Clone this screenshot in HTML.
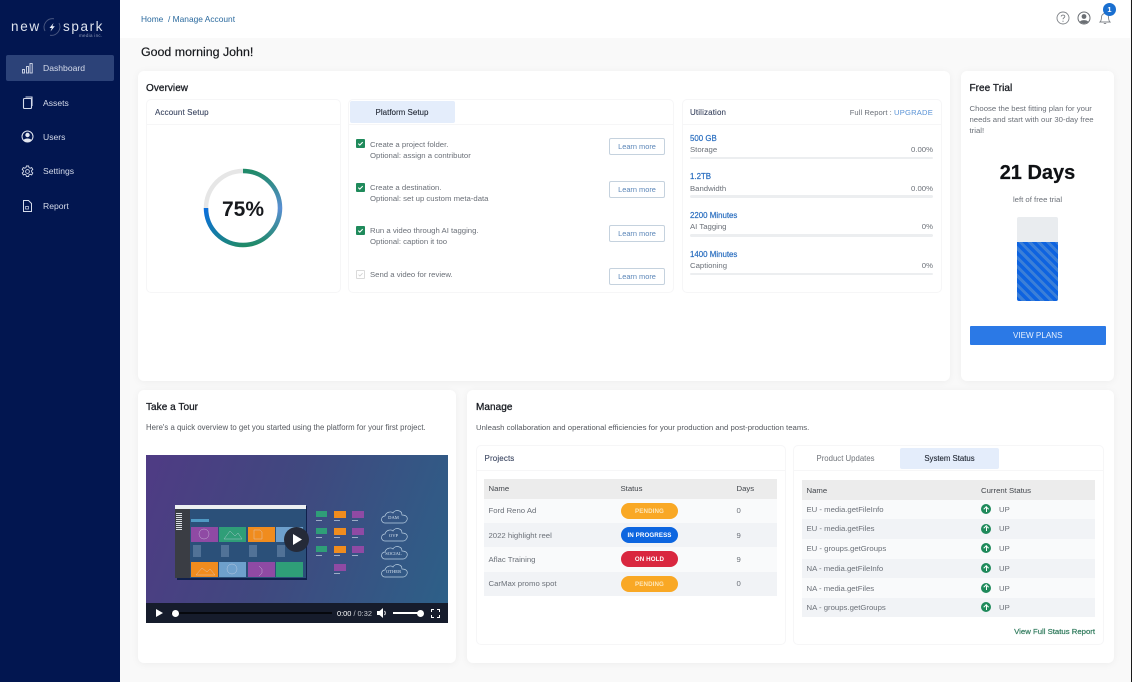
<!DOCTYPE html>
<html><head><meta charset="utf-8"><title>Dashboard</title>
<style>
*{box-sizing:border-box}
html,body{margin:0;padding:0;width:1132px;height:682px;overflow:hidden;background:#f9f9f9;font-family:"Liberation Sans",sans-serif;color:#6b7078}
.a,.t{position:absolute}
.t{white-space:nowrap;font-size:7.75px;line-height:11px;letter-spacing:0}
.card{position:absolute;background:#fff;border-radius:6px;box-shadow:0 1px 8px rgba(0,0,0,.05)}
.sub{position:absolute;background:#fff;border:1px solid #f6f6f7;border-radius:5px}
.h{font-size:10px;color:#1b1e24;letter-spacing:.05px;-webkit-text-stroke:.3px #1b1e24}
.sh{color:#3a4560;font-size:8px;letter-spacing:.13px;-webkit-text-stroke:.1px #3a4560}
.nav{color:#d5dbea;font-size:8.6px;letter-spacing:0}
.lm{position:absolute;left:609px;width:56px;height:17px;background:#fff;border:1px solid #c5d2de;border-radius:2px;color:#5b86b8;font-size:7.4px;line-height:15px;text-align:center;letter-spacing:0}
.cb{position:absolute;left:356px;width:9px;height:9px;background:#1f8a5b;border-radius:1px}
.blue{color:#2b6fc0;font-size:7.9px;-webkit-text-stroke:.2px #2b6fc0}
.bar{position:absolute;left:690px;width:243px;height:2.5px;background:#eceef0;border-radius:2px}
.pill{position:absolute;left:621px;width:57px;height:16px;border-radius:8px;color:#fff;text-align:center;font-size:6.2px;line-height:17px;font-weight:bold;letter-spacing:.1px}
.up{position:absolute;left:981px;width:10px;height:10px;border-radius:50%;background:#1f8a5b}
.up:before{content:"";position:absolute;left:4.5px;top:3px;width:1px;height:4.5px;background:#fff}
.up:after{content:"";position:absolute;left:3.2px;top:2.9px;width:3.4px;height:3.4px;border-left:1px solid #fff;border-top:1px solid #fff;transform:rotate(45deg)}
.cl{left:379px;width:29px;text-align:center;font-size:4.6px;line-height:6px;color:#d5e2ee;font-family:"Liberation Serif",serif}
.g{background:#2f9e78}.o{background:#f08c1e}.p{background:#8f4aa4}.b{background:#6ea0cc}
.cap{position:absolute;width:6px;height:1px;background:#c8d4e2;opacity:.7}
</style></head><body>

<div class="a" style="left:0;top:0;width:120px;height:682px;background:#021650"></div>
<div class="a" style="left:1130.5px;top:0;width:1.5px;height:682px;background:#1a1a1a"></div>
<div class="a" style="left:120px;top:0;width:1010px;height:38px;background:#fff"></div>

<!-- logo -->
<div class="t" style="left:11px;top:19px;color:#dfe4ee;font-size:13.5px;line-height:16px;letter-spacing:1.7px">new</div>
<div class="t" style="left:63px;top:19px;color:#dfe4ee;font-size:13.5px;line-height:16px;letter-spacing:1.6px">spark</div>
<div class="t" style="left:79px;top:33px;color:#8f9ab8;font-size:4.5px;line-height:6px;letter-spacing:.3px">media inc.</div>
<svg class="a" style="left:42px;top:17px" width="20" height="20" viewBox="0 0 20 20" fill="none"><path d="M3 14A8.500 8.500 0 0 1 12 1.800" stroke="#47557f" stroke-width="1"/><path d="M17 6A8.500 8.500 0 0 1 8 18.200" stroke="#47557f" stroke-width="1"/><path d="M11.500 6L7.500 11h2.300L8.500 14.500l4.300-5.200h-2.400z" fill="#eef1f7"/></svg>

<!-- nav -->
<div class="a" style="left:6px;top:55px;width:108px;height:26px;background:#2c4278;border-radius:2px"></div>
<svg class="a" style="left:21px;top:61px" width="13" height="14" viewBox="0 0 13 14" fill="none" stroke="#d5dbea" stroke-width=".9"><rect x="1.500" y="8.500" width="2" height="3.500"/><rect x="5.500" y="5.500" width="2" height="6.500"/><rect x="9" y="2.500" width="2.200" height="9.500"/></svg>
<div class="t nav" style="left:43px;top:63px">Dashboard</div>
<svg class="a" style="left:22px;top:96px" width="12" height="14" viewBox="0 0 12 14" fill="none" stroke="#d5dbea" stroke-width="1.100"><rect x="1.500" y="2.500" width="8" height="10" rx="1"/><path d="M3.500 1h6.500v9"/></svg>
<div class="t nav" style="left:43px;top:97.500px">Assets</div>
<svg class="a" style="left:21px;top:130px" width="13" height="13" viewBox="0 0 13 13"><circle cx="6.500" cy="6.500" r="5.500" fill="none" stroke="#e3e7f0" stroke-width="1"/><circle cx="6.500" cy="5" r="2.200" fill="#e3e7f0"/><path d="M2.700 10.200C3.500 8 9.500 8 10.300 10.200 8.500 12 4.500 12 2.700 10.200z" fill="#e3e7f0"/></svg>
<div class="t nav" style="left:43px;top:132px">Users</div>
<svg class="a" style="left:21px;top:165px" width="13" height="13" viewBox="0 0 13 13" fill="none" stroke="#d5dbea" stroke-width=".9"><path d="M5.400 1h2.200l.4 1.600 1.200.6 1.500-.6 1.100 1.900-1.200 1.100v1.300l1.200 1.100-1.100 1.900-1.500-.6-1.200.6-.4 1.600H5.400l-.4-1.600-1.200-.6-1.500.6-1.100-1.900 1.200-1.100V5.600L1.200 4.500l1.100-1.900 1.500.6 1.200-.6z"/><circle cx="6.500" cy="6.500" r="1.900"/></svg>
<div class="t nav" style="left:43px;top:166px">Settings</div>
<svg class="a" style="left:22px;top:199px" width="11" height="14" viewBox="0 0 11 14" fill="none" stroke="#d5dbea" stroke-width="1"><path d="M1.500 1.500h5l3 3v8h-8z"/><path d="M3.500 7.500h3v2.500h-3z" stroke-width=".7"/></svg>
<div class="t nav" style="left:43px;top:200.500px">Report</div>

<!-- top bar -->
<div class="t" style="left:141px;top:13.500px;color:#2b6a9e;font-size:8.400px">Home&nbsp; / Manage Account</div>
<svg class="a" style="left:1056px;top:11px" width="14" height="14" viewBox="0 0 14 14" fill="none"><circle cx="7" cy="7" r="6" stroke="#7f8388" stroke-width=".9"/><path d="M5.200 5.500C5.300 3.600 8.800 3.600 8.800 5.500 8.800 6.800 7 6.800 7 8.300" stroke="#7f8388" stroke-width=".9"/><circle cx="7" cy="10.200" r=".6" fill="#7f8388"/></svg>
<svg class="a" style="left:1077px;top:11px" width="14" height="14" viewBox="0 0 14 14"><circle cx="7" cy="7" r="6" fill="none" stroke="#6a6e73" stroke-width="1"/><circle cx="7" cy="5.500" r="2.400" fill="#6a6e73"/><path d="M2.800 10.800C4 8.500 10 8.500 11.200 10.800 9 13 5 13 2.800 10.800z" fill="#6a6e73"/></svg>
<svg class="a" style="left:1098px;top:11px" width="14" height="14" viewBox="0 0 14 14" fill="none" stroke="#7f8388" stroke-width=".9"><path d="M2 11h10c-1.500-1.500-1.500-3-1.500-5A3.500 3.500 0 0 0 3.500 6c0 2 0 3.500-1.500 5z"/><path d="M5.800 12.500h2.400"/></svg>
<div class="a" style="left:1103px;top:3px;width:13px;height:13px;border-radius:50%;background:#1a6fd0;color:#fff;font-size:7.500px;line-height:13px;text-align:center;font-weight:bold">1</div>

<div class="t" style="left:141px;top:44px;font-size:12.400px;line-height:16px;color:#16181c;-webkit-text-stroke:.2px #16181c">Good morning John!</div>

<!-- Overview card -->
<div class="card" style="left:138px;top:71px;width:812px;height:310px"></div>
<div class="t h" style="left:146px;top:82.500px">Overview</div>

<div class="sub" style="left:146px;top:99px;width:195px;height:194px"></div>
<div class="a" style="left:147px;top:124px;width:193px;height:1px;background:#f6f6f7"></div>
<div class="t sh" style="left:155px;top:107px">Account Setup</div>
<svg class="a" style="left:200px;top:165px" width="86" height="86" viewBox="0 0 86 86" fill="none">
<defs><linearGradient id="g1" gradientUnits="userSpaceOnUse" x1="43" y1="6" x2="43" y2="80"><stop offset="0" stop-color="#1f8a68"/><stop offset=".5" stop-color="#5a8fd4"/><stop offset="1" stop-color="#1f8a68"/></linearGradient>
<linearGradient id="g2" gradientUnits="userSpaceOnUse" x1="43" y1="80" x2="6" y2="43"><stop offset="0" stop-color="#1f8a68"/><stop offset="1" stop-color="#0b6fdc"/></linearGradient></defs>
<circle cx="43" cy="43" r="37" stroke="#e6e6e6" stroke-width="4.500"/>
<path d="M43 6A37 37 0 0 1 43 80" stroke="url(#g1)" stroke-width="4.500"/>
<path d="M43 80A37 37 0 0 1 6 43" stroke="url(#g2)" stroke-width="4.500"/>
</svg>
<div class="t" style="left:200px;top:198px;width:86px;text-align:center;font-size:21px;line-height:24px;color:#17191d;font-weight:bold">75%</div>

<div class="sub" style="left:348px;top:99px;width:326px;height:194px"></div>
<div class="a" style="left:349px;top:124px;width:324px;height:1px;background:#f6f6f7"></div>
<div class="a" style="left:350px;top:101px;width:104.500px;height:22px;background:#e4edfb;border-radius:2px"></div>
<div class="t" style="left:350px;top:107px;width:104px;text-align:center;color:#1d2430;font-size:8px;-webkit-text-stroke:.1px #1d2430">Platform Setup</div>

<div class="cb" style="top:139px"></div><svg class="a" style="left:356px;top:139px" width="9" height="9" fill="none" stroke="#fff" stroke-width="1.100"><path d="M2.300 4.600l1.500 1.500 2.900-3"/></svg>
<div class="t" style="left:370px;top:139px">Create a project folder.<br>Optional: assign a contributor</div>
<div class="lm" style="top:137.500px">Learn more</div>

<div class="cb" style="top:183px"></div><svg class="a" style="left:356px;top:183px" width="9" height="9" fill="none" stroke="#fff" stroke-width="1.100"><path d="M2.300 4.600l1.500 1.500 2.900-3"/></svg>
<div class="t" style="left:370px;top:182px">Create a destination.<br>Optional: set up custom meta-data</div>
<div class="lm" style="top:181px">Learn more</div>

<div class="cb" style="top:226px"></div><svg class="a" style="left:356px;top:226px" width="9" height="9" fill="none" stroke="#fff" stroke-width="1.100"><path d="M2.300 4.600l1.500 1.500 2.900-3"/></svg>
<div class="t" style="left:370px;top:225px">Run a video through AI tagging.<br>Optional: caption it too</div>
<div class="lm" style="top:224.500px">Learn more</div>

<div class="a" style="left:356px;top:270px;width:9px;height:9px;background:#fff;border:1px solid #dadada;border-radius:1px"></div><svg class="a" style="left:356px;top:270px" width="9" height="9" fill="none" stroke="#cfcfcf" stroke-width=".8"><path d="M2.500 4.600l1.400 1.400 2.700-2.800"/></svg>
<div class="t" style="left:370px;top:268.500px">Send a video for review.</div>
<div class="lm" style="top:267.500px">Learn more</div>

<div class="sub" style="left:682px;top:99px;width:260px;height:194px"></div>
<div class="a" style="left:683px;top:124px;width:258px;height:1px;background:#f6f6f7"></div>
<div class="t sh" style="left:690px;top:107px">Utilization</div>
<div class="t" style="right:199px;top:107px;font-size:7.600px;letter-spacing:.06px">Full Report : <span style="color:#5a93d6;letter-spacing:.2px">UPGRADE</span></div>

<div class="t blue" style="left:690px;top:132.500px">500 GB</div><div class="t" style="left:690px;top:144px">Storage</div><div class="t" style="right:199px;top:144px">0.00%</div><div class="bar" style="top:156.500px"></div>
<div class="t blue" style="left:690px;top:171px">1.2TB</div><div class="t" style="left:690px;top:183px">Bandwidth</div><div class="t" style="right:199px;top:183px">0.00%</div><div class="bar" style="top:195px"></div>
<div class="t blue" style="left:690px;top:210px">2200 Minutes</div><div class="t" style="left:690px;top:221px">AI Tagging</div><div class="t" style="right:199px;top:221px">0%</div><div class="bar" style="top:234px"></div>
<div class="t blue" style="left:690px;top:249px">1400 Minutes</div><div class="t" style="left:690px;top:260px">Captioning</div><div class="t" style="right:199px;top:260px">0%</div><div class="bar" style="top:272.500px"></div>

<!-- Free trial -->
<div class="card" style="left:961px;top:71px;width:153px;height:310px"></div>
<div class="t h" style="left:969.500px;top:82.500px">Free Trial</div>
<div class="t" style="left:969.500px;top:103px">Choose the best fitting plan for your<br>needs and start with our 30-day free<br>trial!</div>
<div class="t" style="left:961px;width:153px;text-align:center;top:160px;font-size:20px;line-height:26px;font-weight:bold;color:#0f1114;-webkit-text-stroke:.2px #0f1114">21 Days</div>
<div class="t" style="left:961px;width:153px;text-align:center;top:194px">left of free trial</div>
<div class="a" style="left:1017px;top:217px;width:41px;height:25px;background:#e9ecef;border-radius:2px 2px 0 0"></div>
<div class="a" style="left:1017px;top:242px;width:41px;height:59px;border-radius:0 0 2px 2px;background:repeating-linear-gradient(45deg,#0e63e0 0,#0e63e0 3.500px,#3b7fd8 3.500px,#3b7fd8 6.500px)"></div>
<div class="a" style="left:969.500px;top:326px;width:136.500px;height:19px;background:#2b79e6;border-radius:1px;color:#e8f0fc;font-size:8.100px;line-height:19.500px;text-align:center">VIEW PLANS</div>

<!-- Take a tour -->
<div class="card" style="left:138px;top:390px;width:318px;height:273px"></div>
<div class="t h" style="left:146px;top:401.500px">Take a Tour</div>
<div class="t" style="left:146px;top:422px;color:#55595f;font-size:7.800px">Here's a quick overview to get you started using the platform for your first project.</div>

<div class="a" style="left:146px;top:455px;width:301.500px;height:148px;background:linear-gradient(110deg,#4f3b84 0%,#40487f 45%,#2d6088 100%)"></div>
<div class="a" style="left:146px;top:603px;width:301.500px;height:20px;background:#161c2c"></div>
<!-- screen -->
<div class="a" style="left:177px;top:506px;width:130px;height:74px;background:#10204c"></div>
<div class="a" style="left:174.500px;top:504.500px;width:131px;height:73px;background:#2b5079"></div>
<div class="a" style="left:174.500px;top:504.500px;width:131px;height:4.500px;background:#eceff1"></div>
<div class="a" style="left:174.500px;top:509px;width:15px;height:69px;background:#3a3d44"></div>
<div class="a" style="left:176px;top:513px;width:6px;height:18px;background:repeating-linear-gradient(#d9dde3 0,#d9dde3 1px,#3a3d44 1px,#3a3d44 2px)"></div>
<div class="a" style="left:191px;top:519px;width:18px;height:3px;background:#4f9ac4"></div>
<div class="a p" style="left:191px;top:527px;width:27px;height:15px"></div>
<div class="a g" style="left:219px;top:527px;width:27px;height:15px"></div>
<div class="a o" style="left:248px;top:527px;width:27px;height:15px"></div>
<div class="a b" style="left:276px;top:527px;width:27px;height:15px"></div>
<div class="a o" style="left:191px;top:562px;width:27px;height:15px"></div>
<div class="a b" style="left:219px;top:562px;width:27px;height:15px"></div>
<div class="a p" style="left:248px;top:562px;width:27px;height:15px"></div>
<div class="a g" style="left:276px;top:562px;width:27px;height:15px"></div>
<div class="a" style="left:193px;top:545px;width:105px;height:12px;background:repeating-linear-gradient(90deg,#7f9cbc 0,#7f9cbc 8px,transparent 8px,transparent 28px);opacity:.45"></div>
<svg class="a" style="left:191px;top:527px" width="112" height="50" fill="none" stroke="#d8d8e8" stroke-width=".5" opacity=".7"><circle cx="13" cy="7" r="5"/><path d="M33 12l6-8 5 5 3-3 4 6z"/><path d="M63 3h6l2 2v7h-8z"/><circle cx="41" cy="42" r="5"/><path d="M5 48l6-7 5 4 3-3 5 6z"/><path d="M68 39l3 3v4l-3 3"/></svg>
<div class="a" style="left:284px;top:527px;width:25px;height:25px;border-radius:50%;background:#252a38"></div>
<svg class="a" style="left:292px;top:533px" width="12" height="13"><path d="M1 1l9 5.500-9 5.500z" fill="#fff"/></svg>
<!-- tiles -->
<div class="a g" style="left:316px;top:511px;width:11px;height:6px"></div><div class="cap" style="left:316px;top:520px"></div>
<div class="a o" style="left:334px;top:511px;width:12px;height:6.500px"></div><div class="cap" style="left:334px;top:520px"></div>
<div class="a p" style="left:352px;top:511px;width:12px;height:6.500px"></div><div class="cap" style="left:352px;top:520px"></div>
<div class="a g" style="left:316px;top:528px;width:11px;height:6px"></div><div class="cap" style="left:316px;top:537px"></div>
<div class="a o" style="left:334px;top:528px;width:12px;height:6.500px"></div><div class="cap" style="left:334px;top:537px"></div>
<div class="a p" style="left:352px;top:528px;width:12px;height:6.500px"></div><div class="cap" style="left:352px;top:537px"></div>
<div class="a g" style="left:316px;top:546px;width:11px;height:6px"></div><div class="cap" style="left:316px;top:555px"></div>
<div class="a o" style="left:334px;top:546px;width:12px;height:6.500px"></div><div class="cap" style="left:334px;top:555px"></div>
<div class="a p" style="left:352px;top:546px;width:12px;height:6.500px"></div><div class="cap" style="left:352px;top:555px"></div>
<div class="a p" style="left:334px;top:563.500px;width:12px;height:7px"></div><div class="cap" style="left:334px;top:573px"></div>
<svg class="a" style="left:379px;top:505px" width="32" height="76" fill="none" stroke="#b9cfe2" stroke-width=".7">
<path d="M6 18a3.500 3.500 0 0 1 0-7c1-4 6-5 8-3 2-4 9-3 9 2 4 0 6 2 5 5-1 2-2 3-4 3z"/>
<path d="M6 36a3.500 3.500 0 0 1 0-7c1-4 6-5 8-3 2-4 9-3 9 2 4 0 6 2 5 5-1 2-2 3-4 3z"/>
<path d="M6 54a3.500 3.500 0 0 1 0-7c1-4 6-5 8-3 2-4 9-3 9 2 4 0 6 2 5 5-1 2-2 3-4 3z"/>
<path d="M6 72a3.500 3.500 0 0 1 0-7c1-4 6-5 8-3 2-4 9-3 9 2 4 0 6 2 5 5-1 2-2 3-4 3z"/>
</svg>
<div class="t cl" style="top:515px">DAM</div>
<div class="t cl" style="top:533px">OVP</div>
<div class="t cl" style="top:551px">SOCIAL</div>
<div class="t cl" style="top:569px">OTHER</div>
<!-- controls -->
<svg class="a" style="left:155px;top:608px" width="10" height="10"><path d="M1 1l7 4-7 4z" fill="#fff"/></svg>
<div class="a" style="left:171px;top:611.500px;width:161px;height:2.500px;background:#06080d"></div>
<div class="a" style="left:171.500px;top:609.500px;width:7px;height:7px;border-radius:50%;background:#fff"></div>
<div class="t" style="left:337px;top:608px;color:#c9ccd2;font-size:7.400px"><span style="color:#fff">0:00</span> / 0:32</div>
<svg class="a" style="left:377px;top:608px" width="11" height="10" fill="#fff"><path d="M0 3h2.500L6 0v10L2.500 7H0z"/><path d="M7.500 3a3 3 0 0 1 0 4" stroke="#fff" fill="none"/></svg>
<div class="a" style="left:393px;top:612px;width:27px;height:1.500px;background:#fff"></div>
<div class="a" style="left:417px;top:609.500px;width:7px;height:7px;border-radius:50%;background:#fff"></div>
<svg class="a" style="left:431px;top:609px" width="9" height="9" fill="none" stroke="#fff" stroke-width="1"><path d="M0.500 3V.5h2.500M6 .5h2.500V3M8.500 6v2.500H6M3 8.500H.5V6"/></svg>

<!-- Manage -->
<div class="card" style="left:467px;top:390px;width:647px;height:273px"></div>
<div class="t h" style="left:476px;top:401.500px">Manage</div>
<div class="t" style="left:476px;top:422px;color:#55595f;font-size:7.750px">Unleash collaboration and operational efficiencies for your production and post-production teams.</div>

<div class="sub" style="left:476px;top:445px;width:310px;height:200px"></div>
<div class="a" style="left:477px;top:470px;width:308px;height:1px;background:#f6f6f7"></div>
<div class="t sh" style="left:484.500px;top:453px">Projects</div>
<div class="a" style="left:484px;top:479px;width:293px;height:19.500px;background:#ececec"></div>
<div class="t" style="left:488.500px;top:483px;color:#42464c">Name</div><div class="t" style="left:620.500px;top:483px;color:#42464c">Status</div><div class="t" style="left:736.500px;top:483px;color:#42464c">Days</div>
<div class="a" style="left:484px;top:498.500px;width:293px;height:24.500px;background:#f9fafb"></div>
<div class="a" style="left:484px;top:523px;width:293px;height:24px;background:#f1f3f6"></div>
<div class="a" style="left:484px;top:547px;width:293px;height:24.500px;background:#f9fafb"></div>
<div class="a" style="left:484px;top:571.500px;width:293px;height:24.500px;background:#f1f3f6"></div>
<div class="t" style="left:488.500px;top:505px">Ford Reno Ad</div><div class="pill" style="top:502.500px;background:#f9a825;color:#fde6b8">PENDING</div><div class="t" style="left:736.500px;top:505px">0</div>
<div class="t" style="left:488.500px;top:530px">2022 highlight reel</div><div class="pill" style="top:526.500px;background:#0d66e0">IN PROGRESS</div><div class="t" style="left:736.500px;top:530px">9</div>
<div class="t" style="left:488.500px;top:554px">Aflac Training</div><div class="pill" style="top:551px;background:#d9273f">ON HOLD</div><div class="t" style="left:736.500px;top:554px">9</div>
<div class="t" style="left:488.500px;top:578px">CarMax promo spot</div><div class="pill" style="top:575.500px;background:#f9a825;color:#fde6b8">PENDING</div><div class="t" style="left:736.500px;top:578px">0</div>

<div class="sub" style="left:793px;top:445px;width:311px;height:200px"></div>
<div class="a" style="left:794px;top:470px;width:309px;height:1px;background:#f6f6f7"></div>
<div class="t" style="left:816.500px;top:453px;color:#70747a;font-size:7.800px">Product Updates</div>
<div class="a" style="left:900px;top:447.500px;width:99px;height:21.500px;background:#e4edfb;border-radius:2px"></div>
<div class="t" style="left:900px;width:99px;text-align:center;top:453px;color:#1d2430;font-size:7.800px;-webkit-text-stroke:.1px #1d2430">System Status</div>
<div class="a" style="left:802px;top:480px;width:293px;height:19.500px;background:#ececec"></div>
<div class="t" style="left:806.500px;top:484.500px;color:#42464c">Name</div><div class="t" style="left:981px;top:484.500px;color:#42464c">Current Status</div>
<div class="a" style="left:802px;top:499.500px;width:293px;height:19.500px;background:#f9fafb"></div>
<div class="a" style="left:802px;top:519px;width:293px;height:20px;background:#f1f3f6"></div>
<div class="a" style="left:802px;top:539px;width:293px;height:19.500px;background:#f9fafb"></div>
<div class="a" style="left:802px;top:558.500px;width:293px;height:19.500px;background:#f1f3f6"></div>
<div class="a" style="left:802px;top:578px;width:293px;height:19.500px;background:#f9fafb"></div>
<div class="a" style="left:802px;top:597.500px;width:293px;height:19.500px;background:#f1f3f6"></div>
<div class="t" style="left:806.500px;top:504px">EU - media.getFileInfo</div><div class="up" style="top:504px"></div><div class="t" style="left:999px;top:504px">UP</div>
<div class="t" style="left:806.500px;top:523px">EU - media.getFiles</div><div class="up" style="top:523.500px"></div><div class="t" style="left:999px;top:523px">UP</div>
<div class="t" style="left:806.500px;top:543px">EU - groups.getGroups</div><div class="up" style="top:543px"></div><div class="t" style="left:999px;top:543px">UP</div>
<div class="t" style="left:806.500px;top:563px">NA - media.getFileInfo</div><div class="up" style="top:563px"></div><div class="t" style="left:999px;top:563px">UP</div>
<div class="t" style="left:806.500px;top:582.500px">NA - media.getFiles</div><div class="up" style="top:582.500px"></div><div class="t" style="left:999px;top:582.500px">UP</div>
<div class="t" style="left:806.500px;top:602px">NA - groups.getGroups</div><div class="up" style="top:602px"></div><div class="t" style="left:999px;top:602px">UP</div>
<div class="t" style="right:37px;top:626px;color:#2f7a5c;-webkit-text-stroke:.2px #2f7a5c">View Full Status Report</div>

</body></html>
